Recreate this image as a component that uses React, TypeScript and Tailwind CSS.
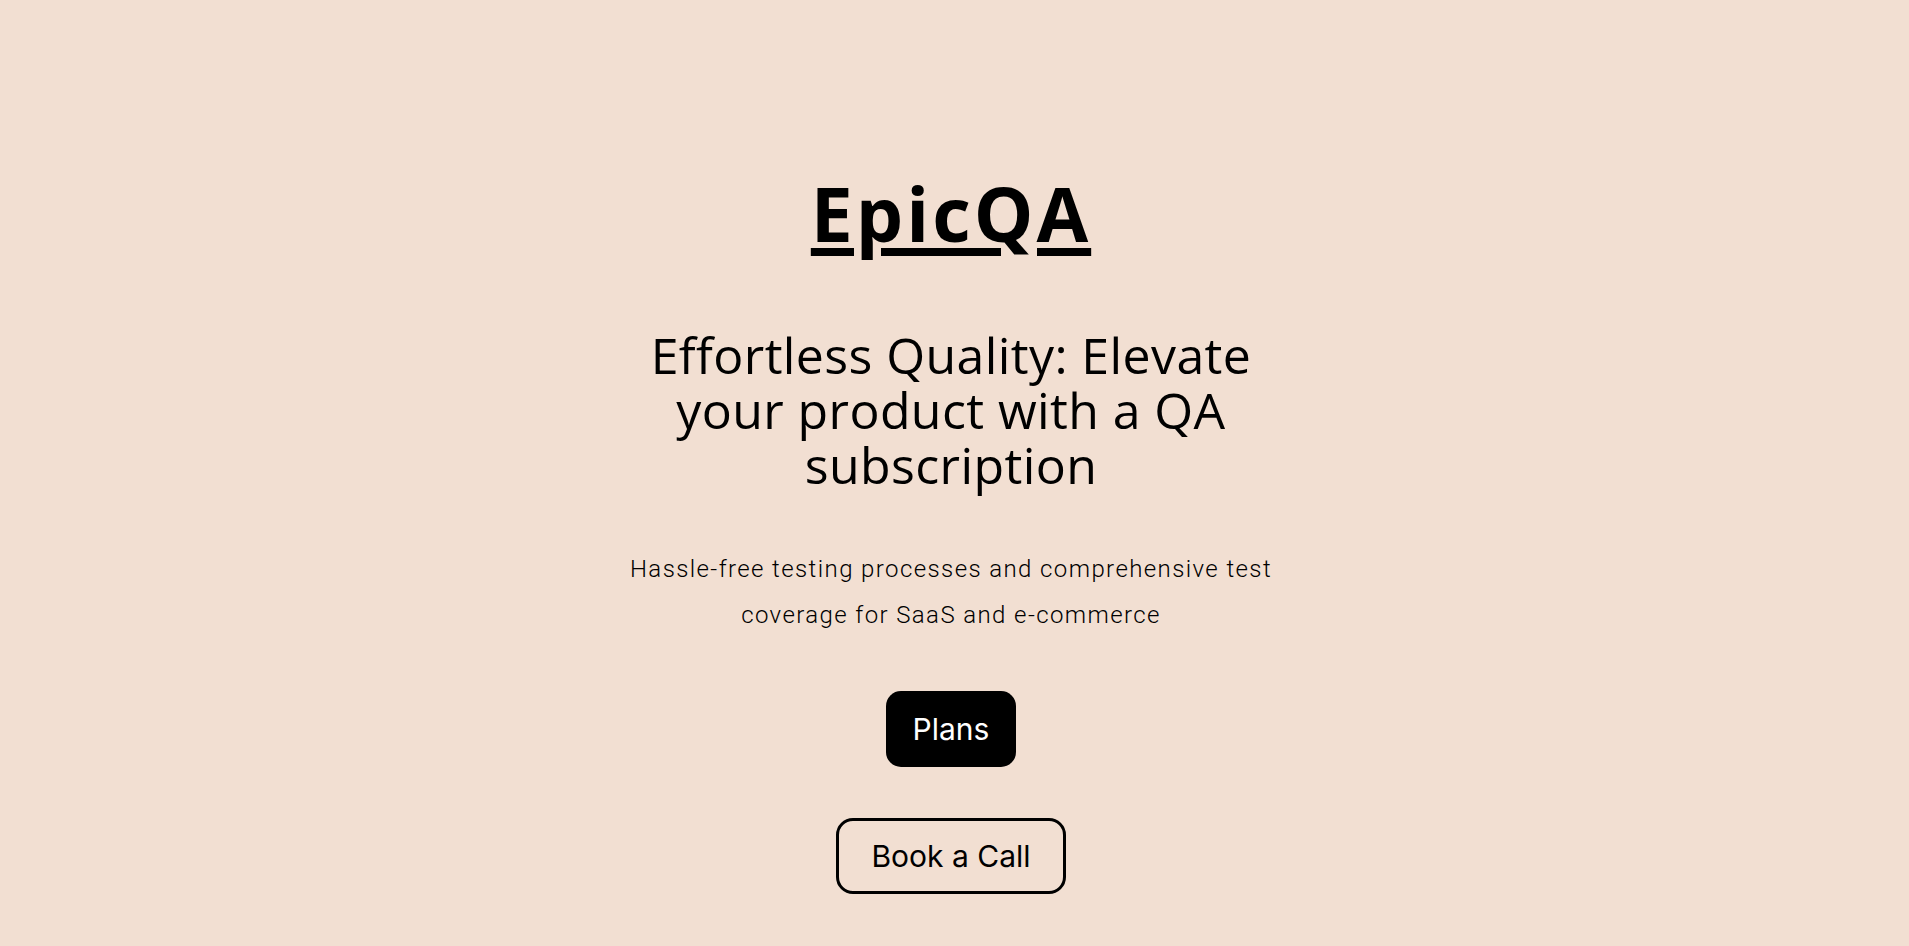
import React from 'react';

const App: React.FC = () => {
  return (
    <div className="min-h-[6900px] bg-[#f2dfd2] text-black">
      {/* Hero */}
      <main className="flex flex-col items-center pt-[176px] pr-[7px] text-center">
        <h1 className="font-['Open_Sans',sans-serif] text-[75px] font-bold leading-none tracking-[3px] underline decoration-[8px] underline-offset-[6px]">
          EpicQA
        </h1>

        <h2 className="mt-[77px] max-w-[660px] font-['Open_Sans',sans-serif] text-[50px] font-normal leading-[55px] tracking-[0.4px]">
          Effortless Quality: Elevate your product with a QA subscription
        </h2>

        <p className="mt-[53px] max-w-[700px] font-['Roboto',sans-serif] text-[24px] font-light leading-[46px] tracking-[1.4px] text-black">
          Hassle-free testing processes and comprehensive test coverage for SaaS and e-commerce
        </p>

        <a
          href="#plans"
          className="mt-[53px] rounded-[15px] bg-black px-[27px] py-[20px] font-['Inter',sans-serif] text-[30px] leading-[36px] text-white"
        >
          Plans
        </a>

        <a
          href="#call"
          className="mt-[51px] rounded-[17px] border-[3px] border-black px-[32px] py-[17px] font-['Inter',sans-serif] text-[30px] leading-[36px] text-black"
        >
          Book a Call
        </a>
      </main>
    </div>
  );
};

export default App;
